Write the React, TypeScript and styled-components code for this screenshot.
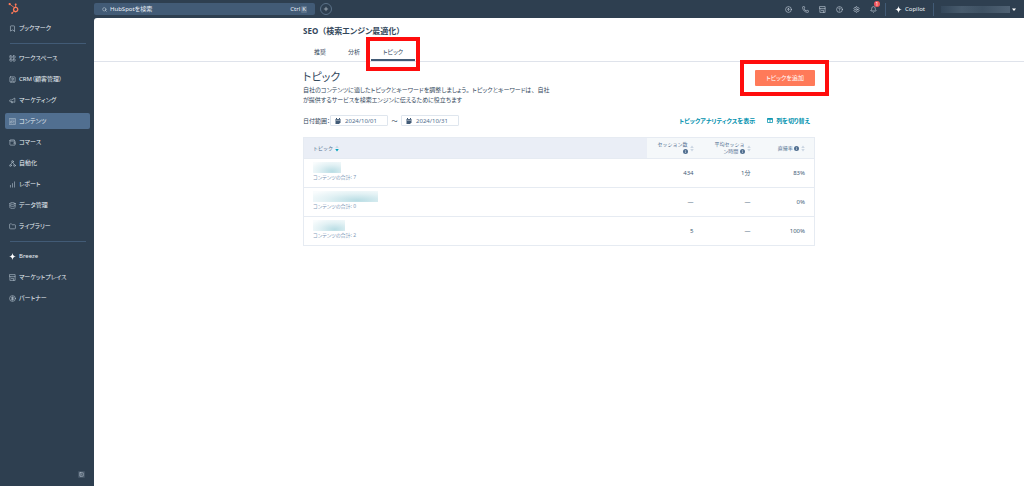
import React from 'react';
import styled, { createGlobalStyle, css } from 'styled-components';
import {
  Bookmark, LayoutGrid, SquareUser, Wallet, ChartNoAxesColumnIncreasing,
  Database, Folder, CircleDollarSign, Search, Plus, CircleArrowUp, Phone, CircleHelp, Settings,
  Bell, PanelLeftClose,
} from 'lucide-react';
import { FaHubspot } from 'react-icons/fa';

const GlobalStyle = createGlobalStyle`
  * { box-sizing: border-box; }
  body {
    margin: 0;
    background: #fff;
    color: #33475b;
    font-family: "Noto Sans", "Noto Sans CJK JP", sans-serif;
    font-feature-settings: "palt";
    font-size: 6px;
    line-height: 10px;
  }
  button, input { font: inherit; font-feature-settings: inherit; color: inherit; margin: 0; }
  button { border: 0; background: none; padding: 0; cursor: pointer; }
  a { color: inherit; text-decoration: none; }
  h1, h2, p { margin: 0; }
  svg { display: block; flex: none; }
`;

const Shell = styled.div`
  display: grid;
  grid-template-columns: 94px minmax(0, 1fr);
  min-height: 100vh;
  background: #2e3f50;
`;

const Sidebar = styled.aside`
  display: flex;
  flex-direction: column;
  padding: 0 4px 8px 5px;
  color: #eaf0f6;
`;

const Logo = styled.a`
  height: 20px;
  padding: 3px 3px 0;
  color: #ff7a59;
`;

const NavGroup = styled.nav`
  display: flex;
  flex-direction: column;
  gap: 5px;
`;

const NavItem = styled.a<{ $active?: boolean }>`
  display: flex;
  align-items: center;
  gap: 3px;
  height: 16px;
  padding-left: 4px;
  border-radius: 2px;
  white-space: nowrap;
  ${(p) => p.$active && css`background: #516f90;`}
  svg { color: #b9c6d3; }
`;

const Divider = styled.hr`
  width: 76px;
  height: 1px;
  margin: 7px 5px 6px;
  border: 0;
  background: #425b76;
`;

const Collapse = styled.button`
  display: grid;
  place-items: center;
  width: 7px;
  height: 7px;
  margin: auto 5px 0 auto;
  border-radius: 1px;
  background: #425364;
  color: #cbd6e2;
`;

const Body = styled.div`
  display: flex;
  flex-direction: column;
`;

const TopBar = styled.header`
  display: flex;
  align-items: center;
  height: 18px;
  padding-right: 8px;
  color: #eaf0f6;
`;

const SearchBox = styled.label`
  display: flex;
  align-items: center;
  gap: 3px;
  width: 221px;
  height: 12px;
  padding: 0 8px;
  border-radius: 2px;
  background: #425b76;
  input {
    flex: 1;
    min-width: 0;
    padding: 0;
    border: 0;
    outline: 0;
    background: none;
  }
  input::placeholder { color: #eaf0f6; opacity: 1; }
`;

const Keys = styled.span`
  display: flex;
  align-items: center;
  gap: 1px;
  kbd {
    padding: 0 1px;
    border-radius: 1px;
    background: #5c738b;
    font: inherit;
    line-height: 7px;
  }
`;

const AddButton = styled.button`
  display: grid;
  place-items: center;
  width: 12px;
  height: 12px;
  margin-left: 5px;
  border: 1px solid #5a7188;
  border-radius: 50%;
`;

const Tools = styled.div`
  display: flex;
  align-items: center;
  gap: 10px;
  margin-left: auto;
  color: #cbd6e2;
`;

const ToolButton = styled.button`
  position: relative;
  width: 7px;
  height: 7px;
`;

const Badge = styled.span`
  position: absolute;
  top: -5px;
  right: -3px;
  width: 6px;
  height: 6px;
  border-radius: 50%;
  background: #f2545b;
  color: #fff;
  font-size: 5px;
  line-height: 6px;
`;

const Copilot = styled.button`
  display: flex;
  align-items: center;
  gap: 3px;
  height: 13px;
  margin-left: 8px;
  padding: 0 8px 0 9px;
  border: solid #425b76;
  border-width: 0 1px;
`;

const Account = styled.button`
  display: flex;
  align-items: center;
  gap: 2px;
  margin-left: 7px;
`;

const HiddenName = styled.span`
  width: 69px;
  height: 7px;
  background: linear-gradient(90deg, #34475a, #485b6d 30%, #3e5163 60%, #506274);
`;

const Main = styled.main`
  flex: 1;
  border-top-left-radius: 3px;
  background: #fff;
`;

const Container = styled.div`
  width: 100%;
  max-width: 512px;
  margin: 0 auto;
`;

const PageHead = styled.div`
  padding-top: 7px;
  border-bottom: 1px solid #dfe3eb;
`;

const PageTitle = styled.h1`
  font-size: 8px;
  font-weight: 700;
  line-height: 12px;
`;

/* Punctuation that keeps its full em width inside proportional kana. */
const Wide = styled.span`
  font-feature-settings: normal;
`;

const Tabs = styled.div`
  display: flex;
  margin-top: 5px;
`;

const Marker = css`
  position: relative;
  &::after {
    content: "";
    position: absolute;
    border: 4px solid #ff0d0d;
    pointer-events: none;
  }
`;

const Tab = styled.button<{ $selected?: boolean }>`
  height: 19px;
  padding: 0 11px;
  ${(p) => p.$selected && css`
    ${Marker}
    min-width: 44px;
    box-shadow: inset 0 -2px #425b76;
    &::after { inset: -5px -5px -10px; }
  `}
`;

const Intro = styled.div`
  display: flex;
  justify-content: space-between;
  align-items: flex-start;
  padding-top: 8px;
`;

const Heading = styled.h2`
  font-size: 11px;
  font-weight: 400;
  line-height: 14px;
`;

const Lead = styled.p`
  margin-top: 1px;
`;

const Primary = styled.button`
  ${Marker}
  width: 60px;
  height: 16px;
  border-radius: 1px;
  background: #ff7a59;
  color: #fff;
  &::after { inset: -10px -14px -10px -15px; }
`;

const Filters = styled.div`
  display: flex;
  align-items: center;
  margin-top: 10px;
`;

const DateField = styled.label`
  display: flex;
  align-items: center;
  gap: 4px;
  width: 58px;
  height: 11px;
  padding: 0 4px;
  border: 1px solid #dfe6ee;
  border-radius: 1px;
  input {
    width: 40px;
    padding: 0;
    border: 0;
    outline: 0;
    background: none;
    color: #516f90;
  }
`;

const Between = styled.span`
  width: 13px;
  text-align: center;
`;

const Links = styled.div`
  display: flex;
  gap: 12px;
  margin-left: auto;
  padding-right: 5px;
  color: #0091ae;
  font-weight: 700;
  a { display: flex; align-items: center; gap: 3px; }
`;

const Table = styled.table`
  width: 100%;
  margin-top: 11px;
  border: 1px solid #e6ebf2;
  border-collapse: collapse;
  table-layout: fixed;
`;

const HeadCell = styled.th<{ $width?: number; $main?: boolean }>`
  width: ${(p) => (p.$width ? `${p.$width}px` : 'auto')};
  height: 21px;
  padding: 0 9px;
  background: ${(p) => (p.$main ? '#eaeef6' : '#f5f8fa')};
  color: #516f90;
  font-feature-settings: normal;
  font-size: 5px;
  font-weight: 400;
  line-height: 7px;
  text-align: left;
`;

const HeadLabel = styled.div<{ $end?: boolean }>`
  display: flex;
  align-items: center;
  justify-content: ${(p) => (p.$end ? 'flex-end' : 'flex-start')};
  gap: 2px;
  text-align: right;
  white-space: nowrap;
  span svg { display: inline-block; vertical-align: -1px; }
`;

const Cell = styled.td<{ $number?: boolean }>`
  height: 29px;
  padding: ${(p) => (p.$number ? '0 9px' : '0 9px 4px')};
  border-top: 1px solid #e6ebf2;
  color: #425b76;
  text-align: ${(p) => (p.$number ? 'right' : 'left')};
`;

const TopicName = styled.a<{ $width: number }>`
  display: block;
  width: ${(p) => p.$width}px;
  height: 11px;
  background: radial-gradient(ellipse at 68% 85%, #b9dde4, #e2f1f4 50%, #f9fcfd 90%);
`;

const Count = styled.div`
  color: #7c98b6;
  font-size: 5px;
  line-height: 8px;
`;

type IconProps = { size?: number };

const Line = ({ size = 7, children }: IconProps & { children: React.ReactNode }) => (
  <svg width={size} height={size} viewBox="0 0 24 24" fill="none" stroke="currentColor"
    strokeWidth="2" strokeLinecap="round" strokeLinejoin="round">
    {children}
  </svg>
);

const Horn = ({ size }: IconProps) => (
  <Line size={size}><path d="M20 5v13L9 16H5a3 3 0 0 1-3-3 3 3 0 0 1 3-3h3zM8 16l1 4h3l-1-3" /></Line>
);

const Article = ({ size }: IconProps) => (
  <Line size={size}><path d="M2 2h20v20H2zM6 7h12M6 12h5v5H6zM15 12h3M15 17h3" /></Line>
);

const Nodes = ({ size }: IconProps) => (
  <Line size={size}>
    <circle cx="12" cy="5" r="3" /><circle cx="5" cy="19" r="3" /><circle cx="19" cy="19" r="3" />
    <path d="M11 8l-5 8M13 8l5 8" />
  </Line>
);

const Storefront = ({ size }: IconProps) => (
  <Line size={size}><path d="M3 2h18v7H3zM3 9v13h18V9M8 15h8v7" /></Line>
);

const Spark = () => (
  <svg width="7" height="7" viewBox="0 0 14 14" fill="#fff">
    <path d="M7 0c.7 4.600 2.400 6.300 7 7-4.600.7-6.300 2.400-7 7-.7-4.600-2.400-6.300-7-7 4.600-.7 6.300-2.400 7-7z" />
  </svg>
);

const Sort = ({ active }: { active?: boolean }) => (
  <svg width="4" height="7" viewBox="0 0 6 12">
    <path d="M0 5l3-4 3 4z" fill="#cbd6e2" />
    <path d="M0 7l3 4 3-4z" fill={active ? '#00a4bd' : '#cbd6e2'} />
  </svg>
);

const Info = () => (
  <svg width="5" height="5" viewBox="0 0 10 10">
    <circle cx="5" cy="5" r="5" fill="#516f90" />
    <path d="M5 2v1.500M5 4.500v3.500" stroke="#fff" strokeWidth="1" />
  </svg>
);

const Calendar = () => (
  <svg width="6" height="6" viewBox="0 0 12 12">
    <path d="M1 2h10v7l-3 3H1z" fill="#425b76" />
    <path d="M3 0v3M9 0v3" stroke="#425b76" strokeWidth="2" />
    <path d="M2 4.500h8" stroke="#fff" />
  </svg>
);

const Columns = () => (
  <svg width="6" height="5" viewBox="0 0 12 10" fill="none" stroke="#0091ae" strokeWidth="1.500">
    <path d="M1 1h10v8H1zM6 3v6" />
    <path d="M1 2h10" strokeWidth="3" />
  </svg>
);

const Caret = () => (
  <svg width="4" height="3" viewBox="0 0 8 6"><path d="M0 1h8L4 6z" fill="#fff" /></svg>
);

const mainNav = [
  { label: 'ワークスペース', Icon: LayoutGrid },
  { label: 'CRM（顧客管理）', Icon: SquareUser },
  { label: 'マーケティング', Icon: Horn },
  { label: 'コンテンツ', Icon: Article, active: true },
  { label: 'コマース', Icon: Wallet },
  { label: '自動化', Icon: Nodes },
  { label: 'レポート', Icon: ChartNoAxesColumnIncreasing },
  { label: 'データ管理', Icon: Database },
  { label: 'ライブラリー', Icon: Folder },
];

const tools = [
  { label: 'アップグレード', Icon: CircleArrowUp },
  { label: '通話', Icon: Phone },
  { label: 'マーケットプレイス', Icon: Storefront },
  { label: 'ヘルプ', Icon: CircleHelp },
  { label: '設定', Icon: Settings },
];

const topics = [
  { width: 28, count: 7, sessions: '434', time: '1分', bounce: '83%' },
  { width: 65, count: 0, sessions: '—', time: '—', bounce: '0%' },
  { width: 32, count: 2, sessions: '5', time: '—', bounce: '100%' },
];

export default function App() {
  return (
    <>
      <GlobalStyle />
      <Shell>
        <Sidebar>
          <Logo href="#" aria-label="HubSpot"><FaHubspot size={11} /></Logo>
          <NavGroup>
            <NavItem href="#"><Bookmark size={7} />ブックマーク</NavItem>
          </NavGroup>
          <Divider />
          <NavGroup>
            {mainNav.map(({ label, Icon, active }) => (
              <NavItem key={label} href="#" $active={active}><Icon size={7} />{label}</NavItem>
            ))}
          </NavGroup>
          <Divider />
          <NavGroup>
            <NavItem href="#"><Spark />Breeze</NavItem>
            <NavItem href="#"><Storefront size={7} />マーケットプレイス</NavItem>
            <NavItem href="#"><CircleDollarSign size={7} />パートナー</NavItem>
          </NavGroup>
          <Collapse aria-label="メニューを閉じる"><PanelLeftClose size={5} /></Collapse>
        </Sidebar>
        <Body>
          <TopBar>
            <SearchBox>
              <Search size={5} />
              <input aria-label="検索" placeholder="HubSpotを検索" />
              <Keys>Ctrl <kbd>K</kbd></Keys>
            </SearchBox>
            <AddButton aria-label="作成"><Plus size={6} /></AddButton>
            <Tools>
              {tools.map(({ label, Icon }) => (
                <ToolButton key={label} aria-label={label}><Icon size={7} /></ToolButton>
              ))}
              <ToolButton aria-label="通知"><Bell size={7} /><Badge>1</Badge></ToolButton>
            </Tools>
            <Copilot><Spark />Copilot</Copilot>
            <Account aria-label="アカウント"><HiddenName /><Caret /></Account>
          </TopBar>
          <Main>
            <PageHead>
              <Container>
                <PageTitle>SEO<Wide>（</Wide>検索エンジン最適化<Wide>）</Wide></PageTitle>
                <Tabs role="tablist">
                  <Tab role="tab">推奨</Tab>
                  <Tab role="tab">分析</Tab>
                  <Tab role="tab" aria-selected $selected>トピック</Tab>
                </Tabs>
              </Container>
            </PageHead>
            <Container>
              <Intro>
                <div>
                  <Heading>トピック</Heading>
                  <Lead>
                    自社のコンテンツに適したトピックとキーワードを調整しましょう<Wide>。</Wide>トピックとキーワードは<Wide>、</Wide>自社<br />
                    が提供するサービスを検索エンジンに伝えるために役立ちます
                  </Lead>
                </div>
                <Primary>トピックを追加</Primary>
              </Intro>
              <Filters>
                <span>日付範囲：</span>
                <DateField><Calendar /><input aria-label="開始日" defaultValue="2024/10/01" /></DateField>
                <Between>～</Between>
                <DateField><Calendar /><input aria-label="終了日" defaultValue="2024/10/31" /></DateField>
                <Links>
                  <a href="#">トピックアナリティクスを表示</a>
                  <a href="#"><Columns />列を切り替え</a>
                </Links>
              </Filters>
              <Table>
                <thead>
                  <tr>
                    <HeadCell $main><HeadLabel>トピック<Sort active /></HeadLabel></HeadCell>
                    <HeadCell $width={56}><HeadLabel $end><span>セッション数<br /><Info /></span><Sort /></HeadLabel></HeadCell>
                    <HeadCell $width={57}><HeadLabel $end><span>平均セッショ<br />ン時間 <Info /></span><Sort /></HeadLabel></HeadCell>
                    <HeadCell $width={55}><HeadLabel $end><span>直帰率 <Info /></span><Sort /></HeadLabel></HeadCell>
                  </tr>
                </thead>
                <tbody>
                  {topics.map((t) => (
                    <tr key={t.count}>
                      <Cell>
                        <TopicName href="#" aria-label="トピック" $width={t.width} />
                        <Count>コンテンツの合計: {t.count}</Count>
                      </Cell>
                      <Cell $number>{t.sessions}</Cell>
                      <Cell $number>{t.time}</Cell>
                      <Cell $number>{t.bounce}</Cell>
                    </tr>
                  ))}
                </tbody>
              </Table>
            </Container>
          </Main>
        </Body>
      </Shell>
    </>
  );
}
